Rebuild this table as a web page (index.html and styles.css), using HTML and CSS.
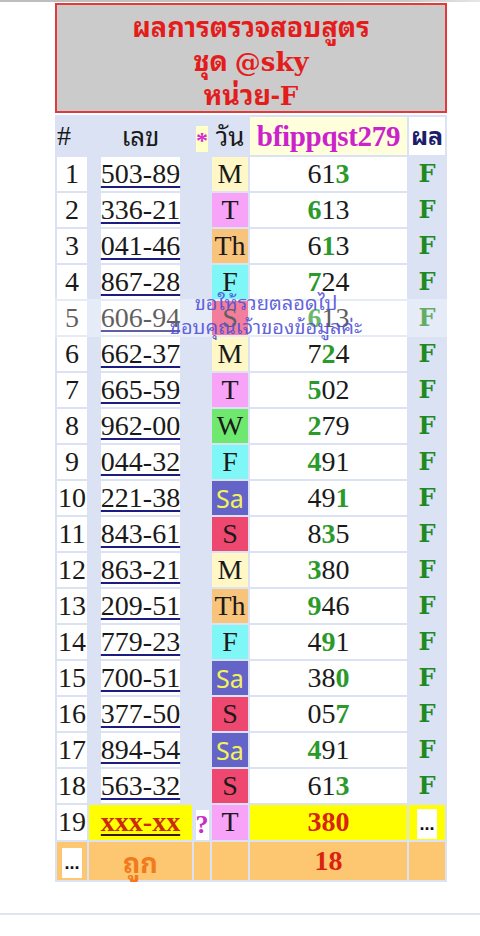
FILE: index.html
```html
<!DOCTYPE html>
<html lang="th">
<head>
<meta charset="utf-8">
<link rel="stylesheet" href="styles.css">
</head>
<body>
<div class="topline"></div>
<div class="wrap">
  <div class="title">
    <div class="tline">ผลการตรวจสอบสูตร</div>
    <div class="tline">ชุด <span class="lat">@sky</span></div>
    <div class="tline last">หน่วย-<span class="lat">F</span></div>
  </div>
  <table class="res">
    <colgroup>
      <col class="c1"><col class="c2"><col class="c3"><col class="c4"><col class="c5"><col class="c6">
    </colgroup>
    <thead>
      <tr class="hrow">
        <th class="h-no">#</th>
        <th class="h-th">เลข</th>
        <th><span class="starbox">*</span></th>
        <th class="h-th">วัน</th>
        <th class="h-f">bfippqst279</th>
        <th class="h-r">ผล</th>
      </tr>
    </thead>
    <tbody>
      <tr><td class="no">1</td><td class="lx"><span class="lnk">503-89</span></td><td></td><td class="d m">M</td><td class="v">61<b>3</b></td><td class="r">F</td></tr>
      <tr><td class="no">2</td><td class="lx"><span class="lnk">336-21</span></td><td></td><td class="d t">T</td><td class="v"><b>6</b>13</td><td class="r">F</td></tr>
      <tr><td class="no">3</td><td class="lx"><span class="lnk">041-46</span></td><td></td><td class="d th">Th</td><td class="v">6<b>1</b>3</td><td class="r">F</td></tr>
      <tr><td class="no">4</td><td class="lx"><span class="lnk">867-28</span></td><td></td><td class="d f">F</td><td class="v"><b>7</b>24</td><td class="r">F</td></tr>
      <tr><td class="no">5</td><td class="lx"><span class="lnk">606-94</span></td><td></td><td class="d s">S</td><td class="v"><b>6</b>13</td><td class="r">F</td></tr>
      <tr><td class="no">6</td><td class="lx"><span class="lnk">662-37</span></td><td></td><td class="d m">M</td><td class="v">7<b>2</b>4</td><td class="r">F</td></tr>
      <tr><td class="no">7</td><td class="lx"><span class="lnk">665-59</span></td><td></td><td class="d t">T</td><td class="v"><b>5</b>02</td><td class="r">F</td></tr>
      <tr><td class="no">8</td><td class="lx"><span class="lnk">962-00</span></td><td></td><td class="d w">W</td><td class="v"><b>2</b>79</td><td class="r">F</td></tr>
      <tr><td class="no">9</td><td class="lx"><span class="lnk">044-32</span></td><td></td><td class="d f">F</td><td class="v"><b>4</b>91</td><td class="r">F</td></tr>
      <tr><td class="no">10</td><td class="lx"><span class="lnk">221-38</span></td><td></td><td class="d sa">Sa</td><td class="v">49<b>1</b></td><td class="r">F</td></tr>
      <tr><td class="no">11</td><td class="lx"><span class="lnk">843-61</span></td><td></td><td class="d s">S</td><td class="v">8<b>3</b>5</td><td class="r">F</td></tr>
      <tr><td class="no">12</td><td class="lx"><span class="lnk">863-21</span></td><td></td><td class="d m">M</td><td class="v"><b>3</b>80</td><td class="r">F</td></tr>
      <tr><td class="no">13</td><td class="lx"><span class="lnk">209-51</span></td><td></td><td class="d th">Th</td><td class="v"><b>9</b>46</td><td class="r">F</td></tr>
      <tr><td class="no">14</td><td class="lx"><span class="lnk">779-23</span></td><td></td><td class="d f">F</td><td class="v">4<b>9</b>1</td><td class="r">F</td></tr>
      <tr><td class="no">15</td><td class="lx"><span class="lnk">700-51</span></td><td></td><td class="d sa">Sa</td><td class="v">38<b>0</b></td><td class="r">F</td></tr>
      <tr><td class="no">16</td><td class="lx"><span class="lnk">377-50</span></td><td></td><td class="d s">S</td><td class="v">05<b>7</b></td><td class="r">F</td></tr>
      <tr><td class="no">17</td><td class="lx"><span class="lnk">894-54</span></td><td></td><td class="d sa">Sa</td><td class="v"><b>4</b>91</td><td class="r">F</td></tr>
      <tr><td class="no">18</td><td class="lx"><span class="lnk">563-32</span></td><td></td><td class="d s">S</td><td class="v">61<b>3</b></td><td class="r">F</td></tr>
      <tr class="next"><td class="no">19</td><td class="lx yel"><span class="xx">xxx-xx</span></td><td><span class="qbox">?</span></td><td class="d t">T</td><td class="v yel red">380</td><td class="r yel"><span class="dots">...</span></td></tr>
      <tr class="sum"><td class="no or"><span class="dots">...</span></td><td class="or ok">ถูก</td><td class="or"></td><td class="or"></td><td class="or red">18</td><td class="or"></td></tr>
    </tbody>
  </table>
  <div class="fade"></div>
  <div class="wm">
    <div class="wm1">ขอให้รวยตลอดไป</div>
    <div class="wm2">ขอบคุณเจ้าของข้อมูลค่ะ</div>
  </div>
</div>
<div class="bottomline"></div>
</body>
</html>
```
FILE: styles.css
```css
html, body {
  margin: 0;
  padding: 0;
  background: #ffffff;
}
body {
  width: 480px;
  height: 936px;
  overflow: hidden;
  font-family: "Liberation Serif", "Noto Serif Thai", "Noto Sans Thai Looped", "Loma", "Garuda", serif;
  color: #1a1a1a;
}
.topline {
  height: 2px;
  background: linear-gradient(to right, #bdbdbd 0%, #c8c8c8 85%, #e6e6e6 100%);
}
.wrap {
  position: relative;
  width: 392px;
  margin: 1px 0 0 55px;
}
.title {
  box-sizing: border-box;
  height: 110px;
  border: 2px solid #e23a3a;
  background: #cbcbcb;
  padding-top: 3px;
  text-align: center;
  color: #e31c1c;
  font-family: "Noto Sans Thai Looped", "Noto Serif Thai", "Loma", "Garuda", "Noto Sans Thai", "Liberation Sans", sans-serif;
  font-weight: bold;
  font-size: 27px;
  overflow: hidden;
}
.tline {
  height: 34px;
  line-height: 34px;
}
.tline.last {
  height: 33px;
}
.lat {
  font-family: "DejaVu Serif", "Liberation Serif", serif;
  font-size: 26px;
}
.res {
  table-layout: fixed;
  width: 392px;
  margin-top: 2px;
  border-collapse: separate;
  border-spacing: 2px;
  background: #dae2f4;
  font-size: 28px;
}
.c1 { width: 30px; }
.c2 { width: 103px; }
.c3 { width: 16px; }
.c4 { width: 36px; }
.c5 { width: 157px; }
.c6 { width: 36px; }
th, td {
  padding: 0;
  text-align: center;
  vertical-align: middle;
  font-weight: normal;
  white-space: nowrap;
}
.hrow th {
  height: 38px;
  line-height: 36px;
}
.h-no {
  text-align: left;
}
.h-th {
  font-family: "Noto Sans Thai Looped", "Noto Serif Thai", "Loma", "Garuda", "Noto Sans Thai", "Liberation Sans", sans-serif;
  font-size: 26px;
}
.hrow .h-th,
.hrow .h-r {
  vertical-align: top;
  line-height: 34px;
}
.starbox {
  display: inline-block;
  width: 12px;
  height: 26px;
  line-height: 28px;
  background: #ffffc8;
  color: #d32cd3;
  font-weight: bold;
  font-size: 24px;
  vertical-align: middle;
}
.h-f {
  background: #ffffdc;
  color: #cc22cc;
  font-weight: bold;
  font-size: 29px;
  letter-spacing: -0.3px;
}
.h-r {
  background: #ffffff;
  color: #1c1c6c;
  font-weight: bold;
  font-family: "Noto Sans Thai Looped", "Noto Serif Thai", "Loma", "Garuda", "Noto Sans Thai", "Liberation Sans", sans-serif;
  font-size: 25px;
}
tbody td {
  height: 34px;
  line-height: 34px;
}
.no {
  background: #ffffff;
}
.lnk {
  display: inline-block;
  background: #ffffff;
  height: 34px;
  text-decoration: underline;
  text-decoration-color: #1b1b80;
  text-decoration-thickness: 2px;
  text-underline-offset: 3px;
}
.d {
  color: #1a1a1a;
}
.m { background: #fff8c6; }
.t { background: #f7a3f7; }
.th { background: #f8c47c; }
.f { background: #80f7f7; }
.s { background: #ee4770; }
.w { background: #6fe86f; }
.sa {
  background: #6464c8;
  color: #f2f25a;
  font-family: "Noto Sans", "Liberation Sans", sans-serif;
  font-size: 25px;
}
.v {
  background: #ffffff;
}
.v b {
  color: #2b9a2b;
}
.r {
  color: #1f8a1f;
  font-weight: bold;
  font-family: "DejaVu Serif", serif;
  font-size: 24px;
}
.yel {
  background: #ffff00;
}
.xx {
  color: #cc2a0a;
  font-weight: bold;
  text-decoration: underline;
  text-decoration-color: #3a1a10;
  text-decoration-thickness: 2px;
  text-underline-offset: 3px;
}
.qbox {
  display: inline-block;
  width: 13px;
  height: 30px;
  line-height: 30px;
  background: #ffffff;
  color: #c82ec8;
  font-weight: bold;
  font-size: 26px;
  vertical-align: middle;
}
.red {
  color: #d9220f;
  font-weight: bold;
}
.dots {
  display: inline-block;
  width: 20px;
  height: 30px;
  line-height: 30px;
  background: #ffffff;
  color: #111111;
  font-family: "Liberation Sans", sans-serif;
  font-weight: bold;
  font-size: 18px;
  vertical-align: middle;
}
.sum td {
  height: 38px;
  line-height: 38px;
}
.or {
  background: #fdc670;
}
.ok {
  color: #f07a1c;
  font-weight: bold;
  font-family: "Noto Sans Thai Looped", "Noto Serif Thai", "Loma", "Garuda", "Noto Sans Thai", "Liberation Sans", sans-serif;
  font-size: 27px;
}
.fade {
  position: absolute;
  left: 0;
  top: 296px;
  width: 392px;
  height: 38px;
  background: rgba(255, 255, 255, 0.3);
  pointer-events: none;
}
.wm {
  position: absolute;
  left: 30px;
  top: 286px;
  width: 362px;
  text-align: center;
  color: rgba(78, 78, 215, 0.88);
  font-family: "Noto Sans Thai Looped", "Noto Serif Thai", "Loma", "Garuda", "Noto Sans Thai", "Liberation Sans", sans-serif;
  font-size: 20px;
  line-height: 24px;
  pointer-events: none;
}
.bottomline {
  position: absolute;
  left: 0;
  top: 913px;
  width: 480px;
  height: 2px;
  background: #dfe6ee;
}
```
